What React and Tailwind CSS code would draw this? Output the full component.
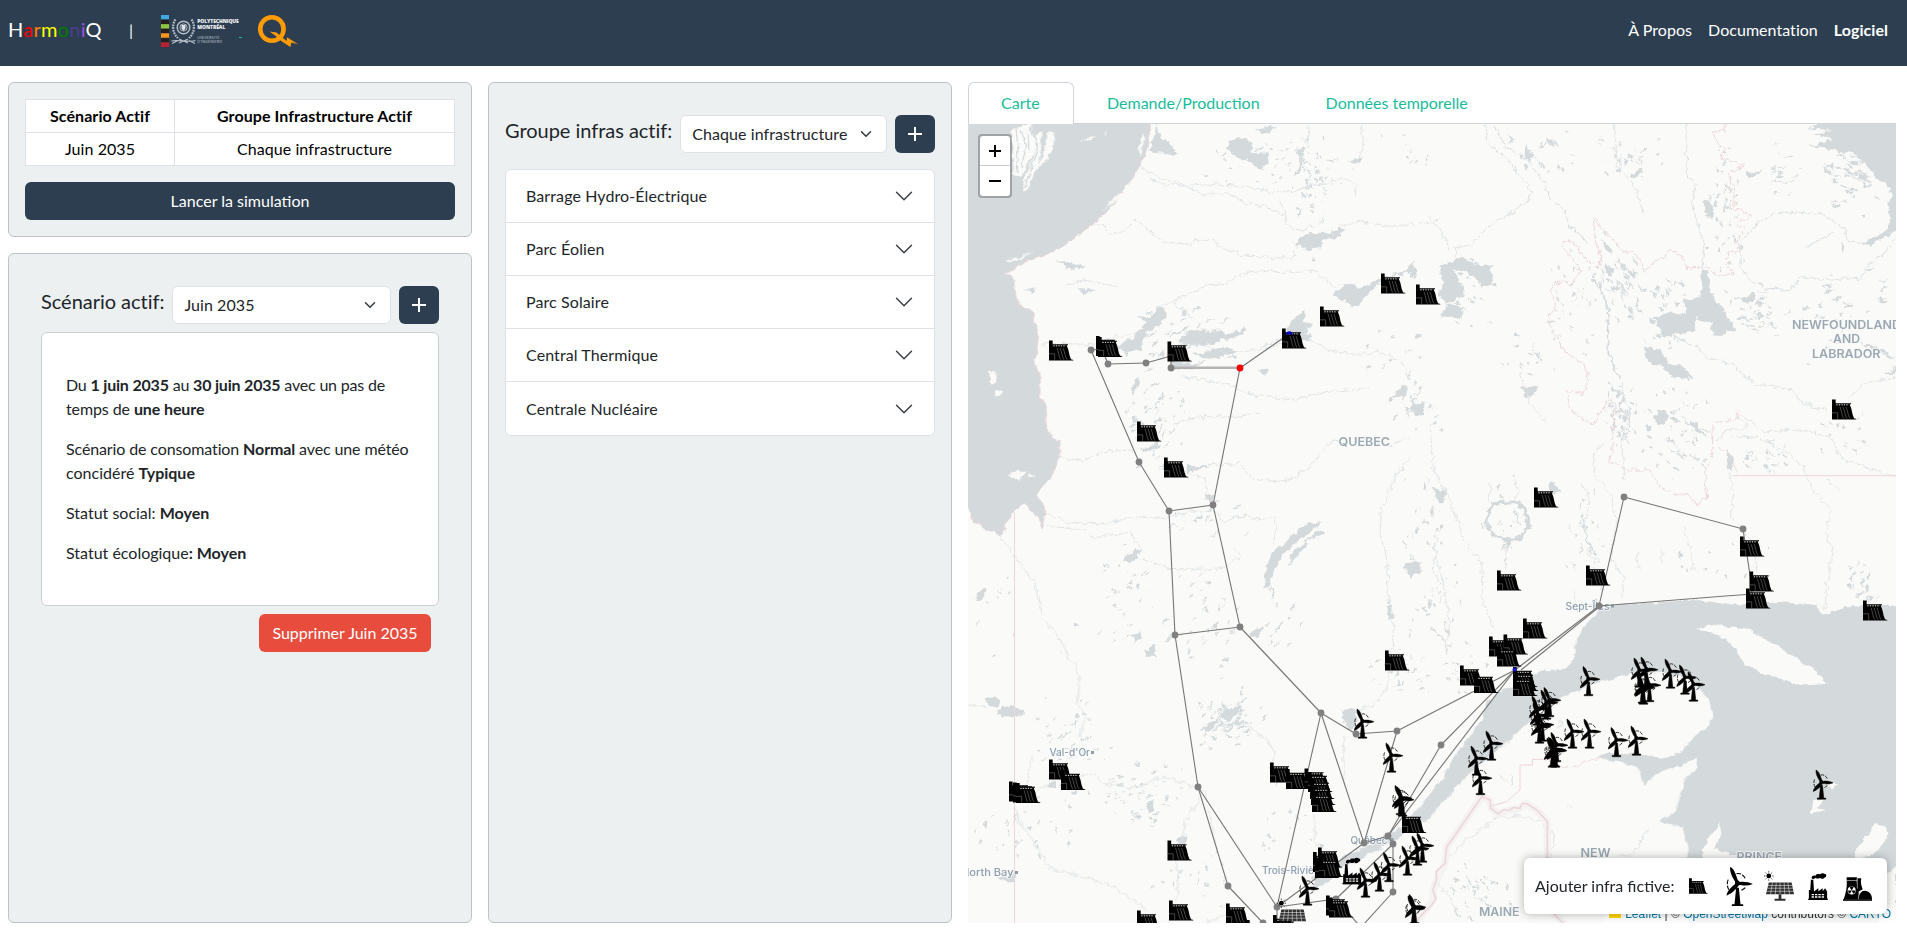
import React from "react";

const WATER = "#d4dadc";
const LAND = "#fafaf8";
const BORDER = "#efd5da";

/* ---------- small deterministic generator for lake fragments ---------- */
function makeRandom(seed) {
  let s = seed;
  return () => {
    s = (s * 1664525 + 1013904223) % 4294967296;
    return s / 4294967296;
  };
}

// x, y, width, height, count, angle (deg), size
const LAKE_FIELDS = [
  [1200, 126, 170, 80, 60, 20, 4],
  [1290, 150, 40, 70, 45, 80, 4],
  [1380, 126, 60, 60, 10, -40, 4],
  [1500, 126, 80, 60, 22, 60, 6],
  [1590, 130, 90, 50, 26, 60, 5],
  [1700, 126, 45, 180, 55, 80, 6],
  [1745, 126, 70, 80, 20, 0, 8],
  [1820, 130, 60, 90, 50, 20, 10],
  [1590, 225, 60, 110, 55, 60, 9],
  [1635, 260, 60, 110, 50, 50, 7],
  [1730, 280, 55, 70, 40, 5, 8],
  [1780, 250, 110, 120, 34, -20, 9],
  [1440, 240, 60, 110, 26, 10, 5],
  [1540, 240, 60, 120, 44, 40, 4],
  [1490, 330, 70, 60, 20, 30, 5],
  [1600, 370, 40, 80, 60, 80, 7],
  [1640, 380, 80, 110, 56, 50, 7],
  [1740, 430, 50, 50, 28, 20, 5],
  [1810, 400, 70, 80, 20, 45, 7],
  [1130, 300, 110, 70, 46, -30, 10],
  [1120, 370, 70, 100, 50, -45, 8],
  [1150, 490, 110, 60, 20, -20, 6],
  [1080, 540, 80, 110, 32, -30, 5],
  [1150, 560, 110, 130, 40, -50, 7],
  [1250, 590, 60, 70, 14, -60, 8],
  [1380, 380, 70, 60, 24, -50, 7],
  [1390, 450, 60, 150, 24, 80, 7],
  [1360, 320, 80, 60, 10, -40, 7],
  [1400, 560, 80, 90, 28, 80, 6],
  [1020, 690, 100, 120, 48, -40, 6],
  [1100, 760, 90, 70, 56, -10, 6],
  [1180, 680, 90, 60, 30, -60, 8],
  [1200, 700, 60, 50, 46, -30, 7],
  [975, 800, 110, 60, 34, 80, 6],
  [1150, 840, 90, 80, 20, 80, 5],
  [1250, 770, 90, 110, 18, 80, 6],
  [1360, 640, 80, 60, 30, -30, 6],
  [1430, 640, 60, 60, 18, 30, 5],
  [1550, 470, 60, 150, 20, 80, 6],
  [1480, 470, 40, 100, 12, 80, 6],
  [1440, 860, 80, 60, 34, 60, 7],
  [1840, 560, 40, 50, 20, -60, 7],
  [1640, 530, 200, 60, 12, 80, 7],
  [970, 560, 60, 120, 8, -60, 6],
];

function buildFragments() {
  const rnd = makeRandom(7341);
  const out = [];
  for (const [x, y, w, h, n, ang, size] of LAKE_FIELDS) {
    for (let i = 0; i < n; i++) {
      const cx = x + (rnd() + rnd()) * 0.5 * w;
      const cy = y + (rnd() + rnd()) * 0.5 * h;
      const a = ((ang + (rnd() - 0.5) * 50) * Math.PI) / 180;
      const len = size * (0.4 + rnd());
      const th = 0.4 + rnd() * 1.3;
      const dx = Math.cos(a) * len;
      const dy = Math.sin(a) * len;
      const nx = -Math.sin(a) * th;
      const ny = Math.cos(a) * th;
      const k = rnd() - 0.5;
      out.push(
        `M${(cx - dx / 2).toFixed(1)} ${(cy - dy / 2).toFixed(1)}L${(cx + nx + dx * k * 0.5).toFixed(1)} ${(cy + ny + dy * k * 0.5).toFixed(1)}L${(cx + dx / 2).toFixed(1)} ${(cy + dy / 2).toFixed(1)}L${(cx - nx).toFixed(1)} ${(cy - ny).toFixed(1)}Z`
      );
    }
  }
  return out.join("");
}
const FRAGMENTS = buildFragments();

/* Each sheet of the base map is drawn at three units per pixel. */
const Sheet = ({ x, y, children }) => (
  <g transform={`translate(${x} ${y}) scale(0.33333)`}>{children}</g>
);

function BaseMap() {
  return (
    <>
      <rect x="968" y="124" width="928" height="799" fill={LAND} />
      <g filter="url(#rough)" fill={WATER} stroke="none">
        <path d={FRAGMENTS} />
        <Sheet x={960} y={70}>
          <path d="M590 160L600 200L625 212L655 256L590 250L568 240L580 215Z" />
          <path d="M803 210L840 202L878 222L880 245L915 248L926 275L900 302L865 272L828 262L805 240Z" />
          <path d="M885 175L950 168L930 186L908 196Z" />
          <path d="M1000 520L1040 490L1100 488L1155 476L1140 500L1090 515L1080 535L1040 540L1015 525Z" />
          <path d="M285 568L330 578L375 592L330 598Z M350 655L410 660L375 670Z M190 658L230 652L215 668Z" />
          <path d="M590 708L625 730L600 760L560 790L540 840L495 852L470 835L480 820L520 800L545 770L575 745Z" />
          <path d="M530 738L580 745L600 762L560 760Z" />
          <path d="M665 800L700 782L780 782L800 802L760 825L700 822L650 820Z M790 800L860 770L850 790L800 812Z M630 872L700 882L740 870L700 896L640 900Z M700 850L800 830L830 845L740 870Z" />
          <path d="M1120 672L1165 640L1200 655L1290 615L1240 655L1210 690L1180 712L1150 690Z M1280 620L1340 600L1365 575L1362 598L1320 618Z M1345 600L1368 592L1370 622L1350 622Z" />
          <path d="M975 775L1005 745L1035 722L1025 760L1060 762L1035 790L1060 800L1020 812L985 790Z" />
          <path d="M895 900L925 895L915 915Z M1055 562L1070 565L1062 580Z" />
          <path d="M1010 240L1030 235L1025 300L1000 320L1020 280Z M1165 275L1205 262L1195 280Z" />
        </Sheet>
        <Sheet x={1430} y={70}>
          <path d="M1120 130L1420 130V490L1378 430L1372 395L1390 380L1365 340L1340 330L1320 300L1300 275L1270 250L1240 245L1140 225L1215 210L1150 190L1210 180L1130 175L1180 155Z" />
          <path d="M1398 420L1370 480L1330 505L1290 525L1340 520L1398 480Z" />
          <path d="M25 590L60 575L100 565L150 585L185 590L185 640L155 655L145 625L110 608L75 600L85 640L105 648L95 680L50 700L100 712L95 745L60 740L30 740L55 700L25 680L40 640Z" />
          <path d="M818 600L830 605L835 640L848 680L870 705L920 780L850 800L845 760L795 745L795 785L740 790L700 800L672 742L700 728L768 735L762 690L808 682Z" />
          <path d="M950 310L990 300L975 322L955 328Z M930 690L975 668L965 700L940 695Z M820 390L852 408L850 440L825 430Z" />
          <path d="M285 230L312 250L300 270L285 265Z M350 205L375 215L368 235Z M232 190L250 210L240 222Z M600 310L632 295L640 310L610 325Z" />
          <path d="M640 830L700 845L710 875L760 895L780 930L730 920L690 885L655 875Z M1285 818L1340 828L1398 868L1350 850Z M1362 912L1398 890V912Z" />
          <path d="M515 510L545 535L545 550L520 535Z M525 580L548 600L545 620L525 605Z M1235 510L1242 545L1232 540Z" />
        </Sheet>
        <Sheet x={960} y={370}>
          <path d="M1055 455L1085 462L1050 485L1000 525L965 560L945 590L930 650L910 655L918 600L935 545L975 520L1010 480Z" />
          <path d="M1075 482L1100 487L1050 510L1010 560L980 590L1000 545Z M930 650L942 670L935 695Z" />
          <path d="M680 285L760 285L720 298L680 310Z M740 370L762 382L755 400L735 388Z" />
          <path d="M495 560L545 530L530 565L510 580L490 570Z M870 785L910 770L895 800L868 800Z M515 795L545 785L540 810L520 815Z M555 845L580 825L592 860L560 860Z" />
          <path d="M1350 108L1395 98L1390 130L1370 140Z M1295 80L1338 45L1340 70L1310 85Z M1330 580L1385 575L1385 605L1350 620Z M45 680L75 655L70 690L50 695Z" />
          <path d="M540 240L600 215L590 235L550 250Z M520 30L545 20L530 55L515 80Z M736 632L752 636L745 650Z" />
          <path d="M1280 690L1292 720L1302 750L1285 745Z M337 758L360 762L345 770Z" />
        </Sheet>
        <Sheet x={1430} y={370}>
          <path d="M272 55L325 45L312 75L290 80Z M670 145L690 118L718 135L705 165L680 160Z M775 145L800 165L830 200L800 190Z M5 350L45 365L42 400L28 400Z M350 345L372 335L390 365L370 372Z M888 240L910 260L905 300L895 300Z" />
          <path d="M740 0L770 0L790 20L765 18Z" />
        </Sheet>
        <Sheet x={960} y={650}>
          <path d="M1142 185L1165 175L1190 185L1188 230L1165 235L1150 215Z" />
          <path d="M70 150L100 135L118 150L112 175L85 165Z M105 180L155 165L198 188L150 200L110 195Z" />
          <path d="M265 395L288 395L288 415L262 412Z M560 455L582 450L575 490L562 485Z M655 560L682 560L675 582L650 580Z M780 190L845 165L830 195L800 215Z M730 235L780 200L760 235L735 245Z M110 685L175 665L160 700Z" />
          <path d="M1055 700L1110 675L1130 672L1105 695L1070 712Z" />
        </Sheet>
      </g>

      <g filter="url(#coast)" fill={WATER}>
        <Sheet x={960} y={70}>
          <path stroke="#ecd5d9" strokeWidth="3" d="M-20 100H572L568 200L555 260L537 288L520 325L495 350L480 375L440 425L400 462L375 480L330 515L290 538L245 560L190 580L150 600L133 612L155 617L163 640L170 690L195 718L222 725L225 760L235 800L230 850L222 880L240 905L240 985L260 1000L255 1050L272 1100L297 1115L297 1162L275 1220L250 1245L230 1270L245 1300L262 1330L245 1375L235 1340L215 1325L195 1295L165 1325L137 1360L133 1390L118 1400L75 1370L40 1358L24 1310L-20 1300Z" />
        </Sheet>
        <Sheet x={1430} y={650}>
          <path d="M1420 -135H1330L1250 -128L1190 -110L1172 -110L1160 -135L1100 -140L1020 -145L900 -135L820 -150L700 -145L560 -135L510 -120L470 -80L440 -40L430 30L410 55L330 62L290 80L240 115L200 125L175 160L150 220L100 280L40 380L5 425L-22 460L-60 500L-90 530L-170 575L-260 620L-310 655L-355 680L-340 700L-260 650L-150 600L-60 540L0 505L60 430L130 360L200 300L290 225L340 170L400 140L480 105L600 72L700 68L780 85L840 150L848 190L840 228L800 250L760 300L700 327L640 310L580 312L540 305L500 322L560 335L620 350L645 405L680 370L760 345L800 323L803 345L760 400L750 440L740 480L690 515L758 530L772 590L780 840H1420Z" />
        </Sheet>
      </g>
      <g filter="url(#coast)" fill={LAND}>
        <Sheet x={1430} y={650}>
          <path d="M800 -65L840 -77L960 -60L1060 0L1110 30L1180 82L1188 102L1110 107L1010 75L940 40L915 0L880 -35L840 -55Z" />
          <path d="M870 520L875 560L850 595L920 615L1060 640H820L815 595Z M1335 520L1362 530L1375 555L1350 600L1275 640V600Z M1372 670L1398 650V840H1340Z" />
          <path d="M1150 450L1185 445L1160 475L1188 480L1145 488Z M1185 400L1225 403L1205 418Z" />
        </Sheet>
        <Sheet x={960} y={70}>
          <path d="M190 165H215L220 200L245 180L235 260L210 300L230 235L195 300L180 320L160 315L158 225L148 185Z M265 180L282 185L275 250L260 270L235 290L255 240Z M135 575L225 545L190 562L140 580Z M360 212L410 198L395 210Z M435 185L440 185L436 200Z" />
          <path d="M85 905L108 910L105 940L88 940Z M108 957L125 965L120 978L108 975Z M145 1220L170 1198L200 1205L175 1232Z M205 1215L228 1218L210 1225Z M550 190L558 200L545 235L540 260L536 230Z M420 425L480 370L485 378Z" />
          <path d="M222 260L245 215L238 280L200 360L188 365L192 325Z" />
        </Sheet>
      </g>
      {/* channels between the offshore islands */}
      <g filter="url(#coast)" fill="none" stroke={WATER} strokeWidth="1.2">
        <path d="M1016 127L1018 150L1016 172M1021 130L1026 148L1021 168M1031 128L1038 150L1030 170M1034 165L1024 188M1028 133L1029 150" />
      </g>

      {/* rivers */}
      <g filter="url(#rough)" fill="none" stroke="#dbe1e3" strokeWidth="0.8" strokeLinejoin="round">
        <Sheet x={960} y={70}>
          <g strokeWidth="2.6">
            <path d="M540 288L560 305L610 328L680 345L740 342L870 352L930 365L1000 365L1060 345L1160 325L1190 350L1185 375M570 325L600 340L680 350L735 375L800 368L860 400L920 408L970 435L985 475L1030 482L1080 460L1095 430" />
            <path d="M400 462L430 465L455 492L490 485L525 450L555 475L610 515L680 522L750 502L790 535L850 558L1000 565L1010 525M1130 470L1200 455L1300 470L1380 460L1440 450" />
            <path d="M590 712L660 685L740 645L800 640L840 612L905 600L960 608L1060 600L1100 630L1130 655M240 822L300 820L400 825L470 800L540 790" />
            <path d="M1040 805L1110 840L1200 855L1260 845L1320 870L1352 930M1205 165L1210 230L1200 262M1045 165L1040 230L1020 250M320 645L370 630L420 640L470 650" />
            <path d="M640 700L700 742M900 830L1000 800M980 450L960 390M700 820L800 850L900 840L970 820" />
          </g>
        </Sheet>
        <Sheet x={1430} y={70}>
          <g strokeWidth="3">
            <path d="M155 160L172 185L168 212L240 280L305 365L300 390L240 430L160 480L120 525L78 530L75 565" />
            <path d="M190 165L230 230L290 270L330 320L365 390L400 420L420 470L460 500L470 525" stroke={WATER} />
            <path d="M550 160L555 230L565 290L600 330L630 385L640 430M768 160L770 310L795 340L787 410L805 450L820 540L820 600" />
            <path d="M930 520L975 465L1040 428L1140 428L1190 440L1245 475L1255 515L1310 520M930 520L930 590L960 630L1010 655L1080 662L1115 620L1200 630L1290 625L1320 580L1360 555L1398 500" />
            <path d="M740 805L800 828L830 862L900 880L965 930M1130 530L1210 488" />
            <path d="M490 630L520 670L535 740L535 850L570 930" strokeWidth="5" stroke={WATER} />
            <path d="M0 445L30 480L55 530L45 555" />
          </g>
        </Sheet>
        <Sheet x={960} y={370}>
          <g strokeWidth="2.6">
            <path d="M298 262L380 270L430 245L520 240M262 432L330 460L440 460L520 440L600 445L700 425L755 420M245 465L370 480L400 505L510 485L540 530M755 415L790 455L860 435L900 450L945 440L950 480L935 530" />
            <path d="M120 500L165 560L225 640L245 745L290 790L330 870M640 160L720 140L840 140L895 130M660 20L740 30L810 45L880 75L1000 90L1100 65L1230 55" />
            <path d="M700 290L835 280L880 325L970 335L1040 300L1110 220L1150 205M1350 260L1310 310L1265 420L1260 490L1280 560L1285 690L1300 740L1300 840M1410 160L1420 290L1440 330M1350 0L1345 30" />
            <path d="M540 560L620 595L740 598L800 590L840 555L820 530M680 310L735 325L740 375M1350 200L1290 230L1200 210M1430 480L1420 600L1440 640" />
          </g>
        </Sheet>
        <Sheet x={1430} y={370}>
          <g strokeWidth="2.6">
            <path d="M0 285L60 390L100 510L155 580L160 700L190 770M10 520L30 600L50 700L60 780L45 840M230 510L225 600M250 310L265 370L245 400M180 340L178 400M450 340L480 380L465 470L480 560L510 575" />
            <path d="M520 220L490 250L495 320L545 380L560 460L540 560L580 620L575 690M520 660L490 590M925 0L970 40L1090 60L1115 100L1190 120M1250 90L1300 40L1398 25M930 130L1000 185L1120 180L1200 200L1230 260L1280 285L1398 320" />
            <path d="M900 200L980 200L1060 240L1120 290L1150 360L1200 420L1190 500L1210 540L1190 640L1185 720M900 310L910 390L900 440L945 480L980 580L975 620M760 475L780 530L790 600M570 60L600 120L575 230L585 330M1190 325L1230 365" />
            <path d="M860 215L880 185L955 170L920 140M270 10L300 100L345 155M435 660L440 720M620 545L625 600M695 540L698 585" />
            <path d="M235 395L190 400L170 440L172 470L190 495L235 512L275 500L298 465L285 420L265 400L235 395" stroke={WATER} strokeWidth="10" />
            <path d="M258 420L262 450L275 465M235 515L218 545M228 515L240 535" stroke={WATER} strokeWidth="5" />
            <path d="M0 775L35 800L60 830M455 430L475 520L490 550" strokeWidth="4" stroke={WATER} />
          </g>
        </Sheet>
        <Sheet x={960} y={650}>
          <g strokeWidth="3">
            <path d="M300 0L350 45L360 100L350 160L375 190L360 260M165 470L180 520L225 580L270 655L370 680L460 710L520 750L560 780M24 165L80 172" />
            <path d="M230 425L262 402M360 380L400 370L430 400L520 415L610 380L680 400L735 425L745 455M720 440L680 510L665 570L645 610L655 720L650 750" />
            <path d="M780 225L850 220L920 270L945 310L930 360M1290 0L1285 110L1240 165L1190 180M1065 490L1062 560L1085 610L1100 650M1150 260L1155 400M730 819L780 800L850 780M745 480L770 600M215 320L200 400" />
          </g>
        </Sheet>
        <Sheet x={1430} y={650}>
          <g strokeWidth="3">
            <path d="M655 535L625 585L610 610L560 620M60 620L110 570L200 500L280 500L340 520L370 560L360 620M205 370L230 395M240 375L250 405M20 700L60 740L80 790M105 640L110 660" />
            <path d="M380 210L400 220L380 230M220 290L240 270M415 465L430 475M130 740L165 755" />
          </g>
        </Sheet>
      </g>

      {/* administrative borders */}
      <g fill="none" stroke={BORDER} strokeWidth="1" strokeLinejoin="round">
        <path d="M1014.5 513V923M1733 475.7H1896" />
        <g filter="url(#rough)">
          <Sheet x={1430} y={70}>
            <path strokeWidth="3" d="M885 160L885 185L850 182L858 215L888 235L870 265L945 285L895 310L912 360L912 415L962 435L920 465L945 480L925 500L925 550L895 545L885 580L910 610L860 620L830 590L770 595L760 560L720 538L700 565L675 570L665 590L640 595L615 548L580 545L540 500L490 445L495 500L512 560L505 595L470 570L425 512L400 512L405 540L450 600L425 645L395 630L360 660L375 710L352 755L385 810L405 845L465 885L475 930L460 970L410 960L420 1020L490 1065L510 1030L540 985L555 1010L545 1150L535 1180L560 1185L590 1200L660 1200L690 1250L740 1275L775 1270L798 1310L830 1285L825 1220L845 1160L850 1060L925 1045L925 1020" />
            <path strokeWidth="3" d="M865 1135L900 1150L920 1210" />
          </Sheet>
          <Sheet x={1430} y={650}>
            <path strokeWidth="3" d="M345 328L395 350L430 350L450 345L475 330L520 320" />
          </Sheet>
        </g>
        <Sheet x={1430} y={650}>
          <path strokeWidth="22" stroke="#f5f3f2" d="M-45 825L-20 790L10 750L10 720L20 690L45 640L50 590L100 520L155 440L180 450L185 475L205 492L240 480L270 475L285 460L320 480L352 515V720L370 790L405 825" />
          <path strokeWidth="5" d="M-45 825L-30 800L5 765L18 745L8 720L20 690L18 665L45 640L50 590L72 560L100 520L155 440L180 450L182 475L205 492L218 480L240 480L250 472L270 475L275 462L290 460L320 480L352 515V720L370 790L405 825" />
          <path strokeWidth="3" d="M185 468L230 455L270 420V345H307V328H345" />
        </Sheet>
      </g>
    </>
  );
}

function Label({ x, y, w, children }) {
  return (
    <text x={x} y={y} textLength={w} lengthAdjust="spacingAndGlyphs">{children}</text>
  );
}

function MapLabels() {
  return (
    <g
      fill="#9aa8b4"
      stroke={LAND}
      strokeWidth="1.6"
      paintOrder="stroke"
      fontFamily="Inter, 'Liberation Sans', sans-serif"
      fontWeight="600"
    >
      <g fontSize="11.8">
        <Label x="1338.500" y="446" w="51.500">QUEBEC</Label>
        <Label x="1792" y="328.700" w="109">NEWFOUNDLAND</Label>
        <Label x="1833" y="343.300" w="27">AND</Label>
        <Label x="1812" y="357.700" w="68.500">LABRADOR</Label>
        <Label x="1580.500" y="856.500" w="30">NEW</Label>
        <Label x="1479" y="916" w="40.500">MAINE</Label>
        <Label x="1736.500" y="861" w="45.500">PRINCE</Label>
      </g>
      <g fontSize="9.800" fontWeight="500" fill="#8b9db0">
        <Label x="1049.500" y="756" w="40.500">Val-d&apos;Or</Label>
        <Label x="961" y="876" w="52.500">North Bay</Label>
        <Label x="1565.500" y="610" w="44">Sept-Îles</Label>
        <Label x="1350.500" y="843.500" w="37">Québec</Label>
        <Label x="1262" y="874" w="67">Trois-Rivières</Label>
      </g>
      <g stroke="none" fill="#8b9db0">
        <rect x="1091" y="751" width="3" height="3" />
        <rect x="1015" y="871" width="3" height="3" />
        <rect x="1611" y="604.500" width="3" height="3" />
        <rect x="1390.500" y="838" width="3" height="3" />
      </g>
    </g>
  );
}

/* ---------- network ---------- */
const N = {
  a: [1091, 350], b: [1108, 364], c: [1146, 363], d: [1171, 368], e: [1240, 368],
  f: [1289, 334], g: [1139, 462], h: [1169, 511], i: [1213, 505], j: [1175, 635],
  k: [1240, 627], l: [1624, 497], m: [1743, 529], n: [1599, 606], o: [1198, 787],
  p: [1321, 713], q: [1356, 734], r: [1397, 731], s: [1441, 745], t: [1364, 843],
  u: [1388, 836], v: [1393, 844], w: [1393, 892], x: [1228, 886], y: [1277, 907],
  z: [1263, 923], A: [1336, 899], B: [1515, 670], C: [1752, 594], D: [1364, 924],
  E: [1171, 356], F: [1358, 924], G: [1102, 349], H: [1750, 575], I: [1277, 924],
};
const EDGES =
  "aG Gb bc cE Ed de ef ag gh hi ie hj ik jk jo kp pq qr rB pt py ox oy rt Bs su Bu tu ty vA yA vw wD xz AF nB nl lm mH HC Cn yI uv".split(" ");
const NODES = "abcdghijklmnopqrstuvwxyzA".split("");

function Network() {
  return (
    <g>
      <g stroke="#757575" strokeWidth="1.1">
        {EDGES.map((e) => (
          <line key={e} x1={N[e[0]][0]} y1={N[e[0]][1]} x2={N[e[1]][0]} y2={N[e[1]][1]} />
        ))}
        <line x1="1599" y1="607" x2="1521" y2="670" />
        <line x1="1171" y1="367.500" x2="1240" y2="367.500" stroke="#b4b4b4" strokeWidth="2" />
      </g>
      <g fill="#808080">
        {NODES.map((k) => (
          <circle key={k} cx={N[k][0]} cy={N[k][1]} r="3.400" />
        ))}
      </g>
      <circle cx="1240" cy="368" r="3.400" fill="#f00000" />
    </g>
  );
}

/* ---------- infrastructure glyphs ---------- */
function DamShape() {
  return (
    <>
      <path d="M0 0H11V11H57V14H53L58 28L62 46L66 56L73 58.500V60H0Z" />
      <path d="M13 16H51" stroke="#e8e8e6" strokeWidth="3" strokeDasharray="4 3.500" fill="none" />
      <path
        d="M0 40H17V58M24 22C30 36 29 50 35 57M33 22C39 36 39 50 45 57M42 22C48 36 48 50 54 57"
        stroke="#8c8c8c"
        strokeWidth="1.5"
        fill="none"
      />
    </>
  );
}
function WindShape() {
  return (
    <>
      <path d="M12 0C18 2 24 10 28 20L35 40C38 42 40 43 41 45C54 43 68 46 80 51C68 56 56 57 44 54L38 55C32 66 14 82 1 86C2 74 14 60 27 51C26 49 26 46 27 44C18 30 10 14 12 0Z" />
      <path d="M30 62H38L43 112H51V117H17V112H25Z" />
      <path d="M31 20C42 17 52 24 57 34M6 38C2 48 3 60 8 68M46 70C50 67 55 65 59 60" stroke="#000" strokeWidth="3.200" strokeDasharray="14 4" fill="none" />
    </>
  );
}
/* Heavier cut of the turbine for the small map markers. */
function WindMarker() {
  return (
    <g stroke="#000" strokeWidth="2" strokeLinejoin="round"><WindShape /></g>
  );
}
function SolarShape() {
  return (
    <>
      <circle cx="13" cy="14" r="7" />
      <path d="M13 0V28M-1 14H27M3 4L23 24M23 4L3 24" stroke="#000" strokeWidth="2.200" strokeDasharray="4 20 4" />
      <path d="M13 33H80L87 68H5Z" fill="#2f2f2f" />
      <path d="M10 42H82M9 50H84M7 59H86M24 33L18 68M35 33L32 68M46 33V68M58 33L60 68M69 33L74 68" stroke="#f2f2f2" strokeWidth="1.600" />
      <path d="M42 68H50V81H62V87H30V81H42Z" fill="#2f2f2f" />
    </>
  );
}
function ThermalShape() {
  return (
    <>
      <path d="M2 80V50H6L8 20H15L17 50V55L30 45V54L43 45V54L50 45L56 55V80Z" />
      <path d="M10 15C10 7 18 6 22 8C25 1 32 3 35 4C40 -1 47 1 49 3C56 3 54 12 49 13C45 19 38 17 35 14C31 18 24 17 22 14C18 18 12 20 10 15Z" />
      <path d="M10 64H50M10 71H50" stroke="#fafaf8" strokeWidth="4" strokeDasharray="7 3" />
      <path d="M0 78H58" stroke="#000" strokeWidth="4" />
    </>
  );
}
function NuclearShape() {
  return (
    <>
      <path d="M11 0H42L41 9C41 20 45 34 47 44V66H2C8 50 13 28 11 9Z M42 3H55C52 18 56 26 59 36L46 44C43 30 41 14 42 3Z" />
      <path d="M46 66C46 50 54 41 66 41C78 41 87 52 87 66Z" />
      <path d="M0 66H87V71H0Z" />
      <circle cx="26" cy="40" r="12" fill="#fff" />
      <path d="M26 40L20 30A12 12 0 0 1 32 30ZM26 40L37 40A11 11 0 0 1 31 50ZM26 40L21 50A11 11 0 0 1 15 40Z" />
      <path d="M10 10H42M43 3V34M46 66C47 52 52 46 57 42" stroke="#fff" strokeWidth="1.600" fill="none" />
    </>
  );
}

/* marker origins */
const DAMS = [
  [1049, 340.5], [1096, 336], [1098, 337], [1167.5, 341.5], [1282, 328.5], [1320, 306.5], [1381, 273.5], [1416, 284.500],
  [1137, 421.500], [1164, 457.500], [1385, 650.500], [1832, 399.500], [1534, 487.500], [1740, 536.500],
  [1749.500, 571.500], [1746, 588.500], [1863, 600.500], [1586, 565.500], [1497, 570.500], [1523, 618.500],
  [1489, 636.500], [1503.500, 634.500], [1497, 646.500], [1460, 665.500], [1474, 673], [1513, 667], [1514, 671], [1513, 676],
  [1049, 759.500], [1061, 770], [1009, 781.500], [1013, 782.500], [1016, 783], [1270, 762.500], [1286, 769],
  [1304.500, 768.500], [1308, 772], [1310, 779], [1311, 785], [1312, 792], [1402, 813], [1167.500, 840.500],
  [1169, 900.500], [1137, 910.500], [1226, 903.500], [1246, 920], [1313, 852], [1318, 847.500], [1315, 858], [1319, 857],
  [1326, 895.500], [1329, 897.500], [1273, 915],
];
const TURBINES = [
  [1354, 709], [1383, 743], [1392, 785.500], [1394, 787], [1414, 833], [1409, 836], [1399, 846],
  [1380.500, 852.500], [1371, 862], [1357, 868], [1299, 876], [1406, 894.500], [1405, 896],
  [1580, 666.500], [1631, 658], [1638, 657], [1634, 674], [1641, 672.500], [1635, 675], [1662, 659], [1676.500, 665], [1685, 672],
  [1529, 696], [1541, 687.500], [1538, 690], [1530, 703], [1531, 714], [1534, 712], [1564, 719], [1581, 719], [1608, 727.500], [1628, 726],
  [1545.500, 737], [1548, 732.500], [1544, 738], [1547, 738], [1483, 731], [1468, 746], [1472, 765.500], [1813, 770],
];

function Markers() {
  return (
    <g>
      {DAMS.map(([x, y], i) => (
        <g key={i} transform={`translate(${x} ${y}) scale(0.33333)`}><DamShape /></g>
      ))}
      {TURBINES.map(([x, y], i) => (
        <g key={i} transform={`translate(${x} ${y}) scale(0.25)`}><WindMarker /></g>
      ))}
      <g transform="translate(1342.500 857.500) scale(0.33333)"><ThermalShape /></g>
      <g transform="translate(1277 898.500) scale(0.33333)"><SolarShape /></g>
      <path d="M1286 334.500a3.200 3.200 0 0 1 6.400 0z" fill="#0000b8" />
      <circle cx="1514.500" cy="669.500" r="2" fill="#1414e0" />
    </g>
  );
}

/* ---------- logos ---------- */
function PolytechniqueLogo() {
  const stripes = ["#41a9e0", "#231f20", "#8dc63f", "#231f20", "#f7941e", "#231f20", "#be1e2d"];
  return (
    <svg width="78" height="32" viewBox="0 0 78 32">
      {stripes.map((c, i) => (
        <rect key={i} x="0" y={i * 4.571} width="8" height="4.600" fill={c} />
      ))}
      <g fill="none" stroke="#b4bdc6">
        <circle cx="22.500" cy="12.500" r="6.300" strokeWidth="1.500" />
        <circle cx="22.500" cy="12.500" r="3.600" strokeWidth="1" />
        <path d="M14.500 4.500C11 9 11 18 17 23M30.500 4.500C34 9 34 18 28 23" strokeWidth="2.200" strokeDasharray="1.800 0.900" />
        <path d="M10.500 26C16 24 29 28 34.500 25.500M11 28.500L17 25.500M34 28.500L28 25.500M18 24L27 28M27 24L18 28" strokeWidth="1.200" />
      </g>
      <path d="M20.500 10h4v3.500l-2 2.500l-2-2.500z" fill="#dfe4e8" />
      <g fontFamily="'Open Sans', 'Liberation Sans', sans-serif" fill="#f1f3f5">
        <text x="36.300" y="7.900" fontSize="5" fontWeight="800" textLength="41.500">POLYTECHNIQUE</text>
        <text x="36.300" y="14" fontSize="5" fontWeight="800" textLength="28">MONTRÉAL</text>
        <text x="36.300" y="23.700" fontSize="3.800" fill="#c3cad1" textLength="22">UNIVERSITÉ</text>
        <text x="36.300" y="28.300" fontSize="3.800" fill="#c3cad1" textLength="25">D&apos;INGÉNIERIE</text>
      </g>
    </svg>
  );
}
function QLogo() {
  return (
    <svg width="40" height="32" viewBox="0 0 40 32">
      <circle cx="13.900" cy="14" r="11.700" fill="none" stroke="#ff9b05" strokeWidth="4.600" />
      <path d="M11.500 16.500L18.500 17.500L28.500 26L29 22.200L40 29.300L33.500 27.500L32.300 32L22.500 25.500L20.500 23Z" fill="#ff9b05" />
    </svg>
  );
}

/* ---------- interface pieces ---------- */
const ChevronDown = ({ className, width = 2 }) => (
  <svg viewBox="0 0 16 16" className={className} fill="none" stroke="#343a40" strokeWidth={width} strokeLinecap="round" strokeLinejoin="round">
    <path d="m2 5 6 6 6-6" />
  </svg>
);

const PlusButton = () => (
  <button className="ml-2 flex h-[38px] w-10 shrink-0 items-center justify-center rounded-md bg-[#2c3e50]">
    <svg width="14" height="14" viewBox="0 0 14 14" stroke="#fff" strokeWidth="2">
      <path d="M7 0V14M0 7H14" />
    </svg>
  </button>
);

const Select = ({ children, className }) => (
  <div className={`flex h-[38px] items-center justify-between rounded-md border border-[#dee2e6] bg-white pl-[11px] pr-[14px] ${className}`}>
    <span className="whitespace-nowrap tracking-[0.08px]">{children}</span>
    <ChevronDown className="h-3 w-3" />
  </div>
);

const GROUPS = ["Barrage Hydro-Électrique", "Parc Éolien", "Parc Solaire", "Central Thermique", "Centrale Nucléaire"];

export default function App() {
  return (
    <div className="flex h-[935px] w-full flex-col overflow-hidden bg-white font-['Lato',sans-serif] text-base leading-6 text-[#212529]">
      <nav className="flex h-[66px] shrink-0 justify-between bg-[#2c3e50] pl-2 pr-[19px] text-white">
        <div className="flex">
          <div className="w-[93px] pt-[14px] text-xl leading-[30px] tracking-[0.25px]">
            <span>H</span>
            <span className="text-[#ff0000]">a</span>
            <span className="text-[#ff7f00]">r</span>
            <span className="text-[#ffff00]">m</span>
            <span className="text-[#008000]">o</span>
            <span className="text-[#4b3c8f]">n</span>
            <span className="text-[#a34be6]">i</span>
            <span>Q</span>
          </div>
          <div className="ml-[28px] w-[5px] pt-[18px]">|</div>
          <div className="ml-[27px] pt-[15px]"><PolytechniqueLogo /></div>
          <div className="mt-[37px] h-px w-[3px] bg-[#18bc9c]" />
          <div className="ml-4 pt-[15px]"><QLogo /></div>
        </div>
        <div className="flex gap-4 pt-[18px] tracking-[0.04px]">
          <span>À Propos</span>
          <span>Documentation</span>
          <span className="font-bold">Logiciel</span>
        </div>
      </nav>

      <main className="flex min-h-0 flex-1 gap-4 pb-3 pl-2 pr-[11px] pt-4">
        <div className="flex w-[464px] shrink-0 flex-col gap-4">
          <section className="h-[155px] shrink-0 rounded-md border border-[#bdc3c7] bg-[#ecf0f1] p-4">
            <table className="w-full border-collapse bg-white text-center tracking-[0.08px] text-black">
              <tbody>
                <tr className="h-[33px]">
                  <th className="w-[149px] border border-[#dee2e6] font-bold">Scénario Actif</th>
                  <th className="border border-[#dee2e6] font-bold">Groupe Infrastructure Actif</th>
                </tr>
                <tr className="h-[33px]">
                  <td className="border border-[#dee2e6]">Juin 2035</td>
                  <td className="border border-[#dee2e6]">Chaque infrastructure</td>
                </tr>
              </tbody>
            </table>
            <button className="mt-4 h-[38px] w-full rounded-md bg-[#2c3e50] text-white">Lancer la simulation</button>
          </section>

          <section className="flex flex-1 flex-col rounded-md border border-[#bdc3c7] bg-[#ecf0f1] px-8 pt-8">
            <div className="flex items-center">
              <h5 className="mb-2 whitespace-nowrap text-xl leading-6 tracking-[-0.03px]">Scénario actif:</h5>
              <Select className="ml-2 flex-1">Juin 2035</Select>
              <PlusButton />
            </div>
            <div className="mt-2 h-[274px] whitespace-nowrap rounded-md border border-[#cccfd1] bg-white px-6 pt-10">
              <p className="mb-4">
                <span className="tracking-[-0.19px]">Du <b>1 juin 2035</b> au <b>30 juin 2035</b> avec un pas de</span>
                <br />
                <span className="tracking-[-0.1px]">temps de <b>une heure</b></span>
              </p>
              <p className="mb-4">
                <span className="tracking-[-0.12px]">Scénario de consomation <b>Normal</b> avec une météo</span>
                <br />
                <span>concidéré <b>Typique</b></span>
              </p>
              <p className="mb-4">Statut social: <b>Moyen</b></p>
              <p>Statut écologique<b>: Moyen</b></p>
            </div>
            <button className="mr-2 mt-2 h-[38px] w-[172px] self-end rounded-md bg-[#e74c3c] text-white">Supprimer Juin 2035</button>
          </section>
        </div>

        <section className="flex w-[464px] shrink-0 flex-col rounded-md border border-[#bdc3c7] bg-[#ecf0f1] px-4 pt-8">
          <div className="flex items-center">
            <h5 className="mb-2 whitespace-nowrap text-xl leading-6 tracking-[-0.03px]">Groupe infras actif:</h5>
            <Select className="ml-2 flex-1">Chaque infrastructure</Select>
            <PlusButton />
          </div>
          <ul className="mt-4 divide-y divide-[#dee2e6] rounded-md border border-[#dee2e6] bg-white">
            {GROUPS.map((g) => (
              <li key={g} className="flex h-[53px] items-center justify-between pl-5 pr-5">
                <span className="tracking-[0.1px]">{g}</span>
                <ChevronDown className="h-5 w-5" width={1.1} />
              </li>
            ))}
          </ul>
        </section>

        <section className="flex min-w-0 flex-1 flex-col">
          <div className="flex h-[42px] shrink-0 text-[#18bc9c]">
            <div className="w-[106px] rounded-t-md border border-b-0 border-[#ced4da] pl-8 pt-2">Carte</div>
            <div className="border-b border-[#ced4da] px-[33px] pt-[9px]">Demande/Production</div>
            <div className="flex-1 border-b border-[#ced4da] px-[33px] pt-[9px]">Données temporelle</div>
          </div>
          <div className="relative h-[799px] w-[928px] overflow-hidden">
            <svg className="block h-full w-full" viewBox="968 124 928 799">
              <defs>
                <filter id="rough" filterUnits="userSpaceOnUse" x="950" y="100" width="970" height="840">
                  <feTurbulence type="fractalNoise" baseFrequency="0.16" numOctaves="3" seed="4" />
                  <feDisplacementMap in="SourceGraphic" scale="7.500" xChannelSelector="R" yChannelSelector="G" />
                </filter>
                <filter id="coast" filterUnits="userSpaceOnUse" x="950" y="100" width="970" height="840">
                  <feTurbulence type="fractalNoise" baseFrequency="0.12" numOctaves="3" seed="9" />
                  <feDisplacementMap in="SourceGraphic" scale="6" xChannelSelector="R" yChannelSelector="G" />
                </filter>
              </defs>
              <BaseMap />
              <MapLabels />
              <Network />
              <Markers />
            </svg>

            <div className="absolute left-[10px] top-[10px] rounded border-2 border-black/25 bg-clip-padding">
              <div className="flex h-[30px] w-[30px] items-center justify-center rounded-t-sm border-b border-[#ccc] bg-white">
                <svg width="12" height="12" viewBox="0 0 12 12" stroke="#000" strokeWidth="2"><path d="M6 0V12M0 6H12" /></svg>
              </div>
              <div className="flex h-[30px] w-[30px] items-center justify-center rounded-b-sm bg-white">
                <svg width="12" height="12" viewBox="0 0 12 12" stroke="#000" strokeWidth="2"><path d="M0 6H12" /></svg>
              </div>
            </div>

            <div className="absolute bottom-0 right-0 flex h-[18px] items-center whitespace-nowrap bg-white/80 px-[5px] font-['Liberation_Sans',sans-serif] text-xs leading-[18px] text-[#333]">
              <svg width="12" height="8" viewBox="0 0 12 8" className="mr-1">
                <path fill="#4c7be1" d="M0 0h12v4H0z" />
                <path fill="#ffd500" d="M0 4h12v4H0z" />
              </svg>
              <span className="whitespace-pre"><span className="text-[#0078a8]">Leaflet</span> | © <span className="text-[#0078a8]">OpenStreetMap</span> contributors © <span className="text-[#0078a8]">CARTO</span></span>
            </div>

            <div className="absolute bottom-[9px] right-[9px] flex h-14 w-[363px] items-center rounded-md bg-white pl-[11px] shadow-[0_0_10px_rgba(0,0,0,0.3)]">
              <span className="w-[140px] shrink-0 whitespace-nowrap">Ajouter infra fictive:</span>
              <svg className="ml-[14px] shrink-0" width="19" height="16" viewBox="0 0 73 60"><DamShape /></svg>
              <svg className="ml-[18px] shrink-0" width="27" height="39" viewBox="0 0 80 117"><WindShape /></svg>
              <svg className="ml-[11px] shrink-0" width="30" height="30" viewBox="-1 0 88 87"><SolarShape /></svg>
              <svg className="ml-[14px] shrink-0" width="20" height="27" viewBox="0 0 58 80"><ThermalShape /></svg>
              <svg className="ml-[15px] mt-[6px] shrink-0" width="29" height="24" viewBox="0 0 87 71"><NuclearShape /></svg>
            </div>
          </div>
        </section>
      </main>
    </div>
  );
}
